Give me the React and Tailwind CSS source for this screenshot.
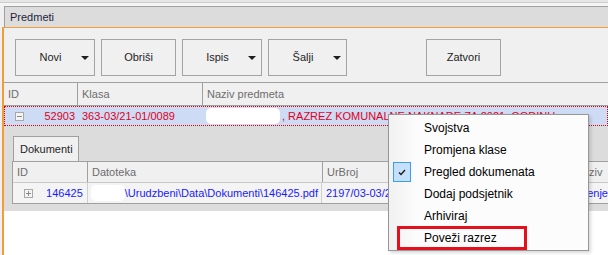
const font = { fontFamily: '"Liberation Sans", Arial, sans-serif' };

function Arrow() {
  return (
    <span className="w-0 h-0 border-l-[4px] border-r-[4px] border-t-[4px] border-l-transparent border-r-transparent border-t-[#1e1e1e] mr-[5px] ml-[2px]" />
  );
}

function Button({ label, width, dropdown, className = "" }) {
  return (
    <div
      className={`h-[37px] border border-[#a3a3a3] bg-[#f0f0f0] flex items-center text-[11px] text-[#1e1e1e] ${width} ${className}`}
    >
      <span className={`flex-1 text-center ${dropdown ? "pl-[6px]" : ""}`}>{label}</span>
      {dropdown && <Arrow />}
    </div>
  );
}

function ExpandBox({ plus }) {
  return (
    <span className="relative w-[9px] h-[9px] border border-[#a8a8a8] bg-[#f4f4f4] shrink-0">
      <span className="absolute left-[1px] top-[3px] w-[5px] h-px bg-[#8a8a8a]" />
      {plus && <span className="absolute left-[3px] top-[1px] w-px h-[5px] bg-[#8a8a8a]" />}
    </span>
  );
}

const menuItems = [
  "Svojstva",
  "Promjena klase",
  "Pregled dokumenata",
  "Dodaj podsjetnik",
  "Arhiviraj",
  "Poveži razrez",
];

export default function App() {
  return (
    <div className="relative w-[608px] h-[255px] overflow-hidden bg-[#f0f0f0] flex flex-col" style={font}>
      <div className="h-[3px] bg-[#e6e6e6] border-b border-[#cdcdcd] shrink-0" />
      <div className="h-[3px] bg-[#f5f5f5] shrink-0" />
      <div className="ml-[4px] h-[21px] border-t border-l border-[#a0a0a0] bg-[#dcdcdc] flex items-center pl-[5px] text-[11px] text-[#1e1e3c] shrink-0">
        Predmeti
      </div>

      <div className="ml-[2px] flex-1 border-l-2 border-t border-[#f39c3c] bg-white flex flex-col">
        <div className="bg-[#f0f0f0] pt-[11px] pl-[11px] pb-[6px] flex gap-[6px]">
          <Button label="Novi" width="w-[80px]" dropdown />
          <Button label="Obriši" width="w-[75px]" />
          <Button label="Ispis" width="w-[80px]" dropdown />
          <Button label="Šalji" width="w-[79px]" dropdown />
          <Button label="Zatvori" width="w-[75px]" className="ml-[73px]" />
        </div>

        {/* main grid */}
        <div className="text-[11px]">
          <div className="h-[24px] flex border-t border-b border-[#a0a0a0] bg-[#f0f0f0] text-[#6d6d6d]">
            <div className="w-[74px] border-r border-[#a0a0a0] pl-[4px] flex items-center">ID</div>
            <div className="w-[125px] border-r border-[#a0a0a0] pl-[4px] flex items-center">Klasa</div>
            <div className="flex-1 pl-[4px] flex items-center">Naziv predmeta</div>
          </div>
          <div className="h-[20px] flex bg-[#cddbf4] border border-dotted border-[#e00000] text-[#e0001a] whitespace-nowrap">
            <div className="w-[73px] flex items-center pl-[10px] pr-[3px]">
              <ExpandBox />
              <span className="flex-1 text-right">52903</span>
            </div>
            <div className="w-[125px] pl-[4px] flex items-center">363-03/21-01/0089</div>
            <div className="flex-1 pl-[3px] flex items-center">
              <span className="w-[74px] h-[16px] rounded-[5px] bg-white mr-[2px]" />
              , RAZREZ KOMUNALNE NAKNADE ZA 2021. GODINU
            </div>
          </div>

          {/* detail */}
          <div className="h-[85px] bg-[#dcdcdc] pl-[8px] pt-[10px] flex flex-col">
            <div className="ml-[1px] w-[66px] h-[25px] border-t border-l border-r border-[#a0a0a0] bg-[#f0f0f0] flex items-center pl-[6px] text-[#1e1e1e]">
              Dokumenti
            </div>
            <div className="border-t border-l border-b border-[#a0a0a0] whitespace-nowrap">
              <div className="h-[21px] flex bg-[#f0f0f0] text-[#6d6d6d] border-b border-[#c8c8c8]">
                <div className="w-[75px] border-r border-[#a0a0a0] pl-[4px] flex items-center">ID</div>
                <div className="w-[235px] border-r border-[#a0a0a0] pl-[4px] flex items-center">Datoteka</div>
                <div className="w-[240px] border-r border-[#a0a0a0] pl-[4px] flex items-center">UrBroj</div>
                <div className="flex-1 pl-[12px] flex items-center">Naziv</div>
              </div>
              <div className="h-[20px] flex bg-[#f4f4f4] text-[#1a1aff]">
                <div className="w-[75px] border-r border-[#cfcfcf] flex items-center pl-[11px] pr-[4px]">
                  <ExpandBox plus />
                  <span className="flex-1 text-right">146425</span>
                </div>
                <div className="w-[235px] border-r border-[#cfcfcf] pl-[3px] flex items-center">
                  <span className="w-[34px] h-[16px] rounded-[5px] bg-white" />
                  \Urudzbeni\Data\Dokumenti\146425.pdf
                </div>
                <div className="w-[240px] border-r border-[#cfcfcf] pl-[4px] flex items-center">2197/03-03/21-01</div>
                <div className="flex-1 pl-[4px] flex items-center">Rješenje</div>
              </div>
            </div>
          </div>
        </div>
      </div>

      {/* context menu */}
      <div className="absolute left-[388px] top-[114px] w-[201px] h-[137px] border border-[#979797] bg-[#fcfcfc] shadow-[2px_2px_3px_rgba(0,0,0,0.15)] pt-[2px]">
        <div className="absolute left-0 top-0 bottom-0 w-[26px] bg-gradient-to-r from-[#f1f1f1] to-[#fbfbfb]" />
        {menuItems.map((item, i) => (
          <div key={item} className="relative h-[22px] flex items-center pl-[35px] text-[12px] text-black">
            {i === 2 && (
              <span className="absolute left-[4px] top-[1px] w-[18px] h-[20px] border border-[#3c9cf0] bg-[#c4e0fa] flex items-center justify-center">
                <svg width="8" height="7" viewBox="0 0 8 7">
                  <path d="M1 3.5 L3 5.5 L7 1" stroke="#1e1e1e" strokeWidth="1.4" fill="none" />
                </svg>
              </span>
            )}
            {item}
          </div>
        ))}
      </div>

      <div className="absolute left-[397px] top-[226px] w-[130px] h-[24px] border-[3px] border-[#e5101c]" />
    </div>
  );
}
